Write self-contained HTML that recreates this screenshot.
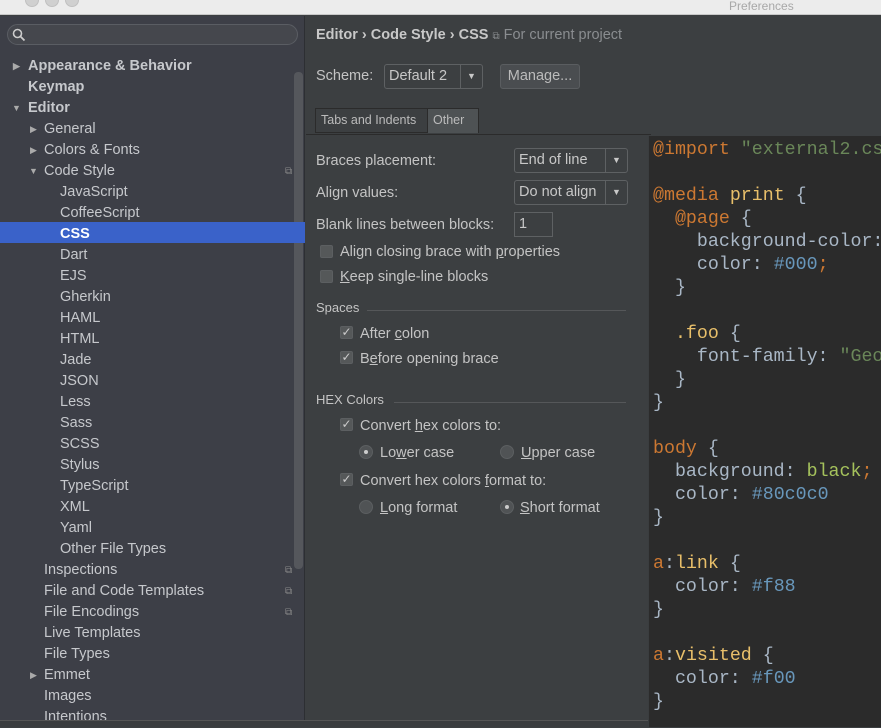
<!DOCTYPE html>
<html><head><meta charset="utf-8"><style>
*{margin:0;padding:0;box-sizing:border-box}
body{width:881px;height:727px;overflow:hidden;background:#3c3f41;font-family:"Liberation Sans",sans-serif;color:#bbbbbb;position:relative;font-size:14px}
.title{position:absolute;left:0;top:0;width:881px;height:15px;background:#ececec;border-bottom:1px solid #c8c8c8;overflow:hidden}
.title .t{position:absolute;left:729px;top:-1px;font-size:12px;color:#a8a8a8}
.dot{position:absolute;top:-7px;width:14px;height:14px;border-radius:50%;background:#d0d0d0;border:1px solid #c0c0c0}
.side{position:absolute;left:0;top:16px;width:305px;height:711px;background:#3d3f47;border-right:1px solid #2d2f33}
.search{position:absolute;left:7px;top:8px;width:291px;height:21px;border-radius:11px;border:1px solid #5a5d63;background:#45474d}
.row{position:absolute;left:0;width:294px;height:21px;line-height:21px;font-size:14.5px;color:#c6c8cc;white-space:nowrap}
.row.b{font-weight:bold}
.row.sel{background:#3a62c9;color:#fff;font-weight:bold}
.arr{position:absolute;font-size:9px;color:#aaa}
.cp{position:absolute;left:285px;font-size:10px;color:#888}
.sb{position:absolute;left:294px;top:56px;width:9px;height:497px;background:#55575c;border-radius:4px}
.main{position:absolute;left:306px;top:16px;width:575px;height:711px}
.crumb{position:absolute;left:10px;top:11px;font-size:14.5px;font-weight:bold;color:#c8c8c8}
.crumb span{font-weight:normal;color:#8a8d90}
.lbl{position:absolute;font-size:14.5px;color:#c4c4c4;white-space:nowrap}
.combo{position:absolute;height:25px;border:1px solid #5e6163;border-radius:3px;background:#3c3f41;font-size:14.5px;line-height:23px;padding-left:4px;color:#c8c8c8}
.combo i{position:absolute;right:0;top:0;width:22px;height:23px;border-left:1px solid #5e6163;font-style:normal;text-align:center;font-size:9px;line-height:23px}
.btn{position:absolute;left:194px;top:48px;width:80px;height:25px;border:1px solid #5a5d60;border-radius:3px;background:#4a4d50;text-align:center;line-height:23px;font-size:14.5px}
.tabs{position:absolute;left:0;top:91px;width:345px;height:28px;border-bottom:1px solid #2b2b2b}
.tab{position:absolute;top:1px;height:25px;border:1px solid #2b2b2b;font-size:12.5px;line-height:23px;padding:0 5px}
.cb{position:absolute;width:13px;height:13px;border:1px solid #5c5f61;border-radius:2px;background:#555859;font-size:12px;line-height:11px;text-align:center;color:#ccc}
.rb{position:absolute;width:14px;height:14px;border-radius:50%;background:#505355;border:1px solid #5c5f61}
.rb.on::after{content:"";position:absolute;left:4px;top:4px;width:4px;height:4px;border-radius:50%;background:#ccc}
.sep{position:absolute;height:1px;background:#555759}
u{text-decoration:underline}
.code{position:absolute;left:342px;top:120px;width:233px;height:591px;background:#2b2b2b;border-left:1px solid #3a3d3f;overflow:hidden;font-family:"Liberation Mono",monospace;font-size:18.3px;color:#a9b7c6}
.code div{position:absolute;left:4px;white-space:pre;line-height:23px}
.k{color:#cc7832}.y{color:#e8bf6a}.g{color:#6a8759}.n{color:#6897bb}.l{color:#a5c25c}
</style></head><body>
<div class="title"><div class="dot" style="left:25px"></div><div class="dot" style="left:45px"></div><div class="dot" style="left:65px"></div><div class="t">Preferences</div></div>
<div class="side">
<div class="search"><svg width="14" height="14" style="position:absolute;left:4px;top:3px"><circle cx="5.5" cy="5.5" r="4" fill="none" stroke="#ccc" stroke-width="1.6"/><path d="M8.5 8.5L12.5 12.5" stroke="#ccc" stroke-width="1.8"/></svg></div>
<div class="sb"></div>
<div class="row b" style="top:40px"><span class="arr" style="left:13px">▶</span><span style="position:absolute;left:28px">Appearance &amp; Behavior</span></div>
<div class="row b" style="top:61px"><span style="position:absolute;left:28px">Keymap</span></div>
<div class="row b" style="top:82px"><span class="arr" style="left:12px">▼</span><span style="position:absolute;left:28px">Editor</span></div>
<div class="row" style="top:103px"><span class="arr" style="left:30px">▶</span><span style="position:absolute;left:44px">General</span></div>
<div class="row" style="top:124px"><span class="arr" style="left:30px">▶</span><span style="position:absolute;left:44px">Colors &amp; Fonts</span></div>
<div class="row" style="top:145px"><span class="arr" style="left:29px">▼</span><span style="position:absolute;left:44px">Code Style</span><span class="cp">⧉</span></div>
<div class="row" style="top:166px"><span style="position:absolute;left:60px">JavaScript</span></div>
<div class="row" style="top:187px"><span style="position:absolute;left:60px">CoffeeScript</span></div>
<div class="row sel" style="top:206px;width:305px;line-height:25px"><span style="position:absolute;left:60px">CSS</span></div>
<div class="row" style="top:229px"><span style="position:absolute;left:60px">Dart</span></div>
<div class="row" style="top:250px"><span style="position:absolute;left:60px">EJS</span></div>
<div class="row" style="top:271px"><span style="position:absolute;left:60px">Gherkin</span></div>
<div class="row" style="top:292px"><span style="position:absolute;left:60px">HAML</span></div>
<div class="row" style="top:313px"><span style="position:absolute;left:60px">HTML</span></div>
<div class="row" style="top:334px"><span style="position:absolute;left:60px">Jade</span></div>
<div class="row" style="top:355px"><span style="position:absolute;left:60px">JSON</span></div>
<div class="row" style="top:376px"><span style="position:absolute;left:60px">Less</span></div>
<div class="row" style="top:397px"><span style="position:absolute;left:60px">Sass</span></div>
<div class="row" style="top:418px"><span style="position:absolute;left:60px">SCSS</span></div>
<div class="row" style="top:439px"><span style="position:absolute;left:60px">Stylus</span></div>
<div class="row" style="top:460px"><span style="position:absolute;left:60px">TypeScript</span></div>
<div class="row" style="top:481px"><span style="position:absolute;left:60px">XML</span></div>
<div class="row" style="top:502px"><span style="position:absolute;left:60px">Yaml</span></div>
<div class="row" style="top:523px"><span style="position:absolute;left:60px">Other File Types</span></div>
<div class="row" style="top:544px"><span style="position:absolute;left:44px">Inspections</span><span class="cp">⧉</span></div>
<div class="row" style="top:565px"><span style="position:absolute;left:44px">File and Code Templates</span><span class="cp">⧉</span></div>
<div class="row" style="top:586px"><span style="position:absolute;left:44px">File Encodings</span><span class="cp">⧉</span></div>
<div class="row" style="top:607px"><span style="position:absolute;left:44px">Live Templates</span></div>
<div class="row" style="top:628px"><span style="position:absolute;left:44px">File Types</span></div>
<div class="row" style="top:649px"><span class="arr" style="left:30px">▶</span><span style="position:absolute;left:44px">Emmet</span></div>
<div class="row" style="top:670px"><span style="position:absolute;left:44px">Images</span></div>
<div class="row" style="top:691px"><span style="position:absolute;left:44px">Intentions</span></div>
</div>
<div style="position:absolute;left:0;top:720px;width:881px;height:7px;background:#3a3c3e;border-top:1px solid #555"></div>
<div class="main">
<div class="crumb">Editor › Code Style › CSS <span style="font-size:10px">⧉</span> <span>For current project</span></div>
<div class="lbl" style="left:10px;top:52px">Scheme:</div>
<div class="combo" style="left:78px;top:48px;width:99px">Default 2<i>▼</i></div>
<div class="btn">Manage...</div>
<div class="tabs"><div class="tab" style="left:9px;width:113px;background:#3c3f41">Tabs and Indents</div><div class="tab" style="left:121px;width:52px;background:#4e5254;border-bottom:none">Other</div></div>
<div class="lbl" style="left:10px;top:137px">Braces placement:</div>
<div class="combo" style="left:208px;top:132px;width:114px">End of line<i>▼</i></div>
<div class="lbl" style="left:10px;top:169px">Align values:</div>
<div class="combo" style="left:208px;top:164px;width:114px">Do not align<i>▼</i></div>
<div class="lbl" style="left:10px;top:201px">Blank lines between blocks:</div>
<div class="combo" style="left:208px;top:196px;width:39px;border-radius:0">1</div>
<div class="cb" style="left:14px;top:229px"></div><div class="lbl" style="left:34px;top:228px">Align closing brace with <u>p</u>roperties</div>
<div class="cb" style="left:14px;top:254px"></div><div class="lbl" style="left:34px;top:253px"><u>K</u>eep single-line blocks</div>
<div class="lbl" style="left:10px;top:284px;font-size:13px">Spaces</div><div class="sep" style="left:61px;top:294px;width:259px"></div>
<div class="cb" style="left:34px;top:310px">✓</div><div class="lbl" style="left:54px;top:310px">After <u>c</u>olon</div>
<div class="cb" style="left:34px;top:335px">✓</div><div class="lbl" style="left:54px;top:335px">B<u>e</u>fore opening brace</div>
<div class="lbl" style="left:10px;top:376px;font-size:13px">HEX Colors</div><div class="sep" style="left:88px;top:386px;width:232px"></div>
<div class="cb" style="left:34px;top:402px">✓</div><div class="lbl" style="left:54px;top:402px">Convert <u>h</u>ex colors to:</div>
<div class="rb on" style="left:53px;top:429px"></div><div class="lbl" style="left:74px;top:429px">Lo<u>w</u>er case</div>
<div class="rb" style="left:194px;top:429px"></div><div class="lbl" style="left:215px;top:429px"><u>U</u>pper case</div>
<div class="cb" style="left:34px;top:457px">✓</div><div class="lbl" style="left:54px;top:457px">Convert hex colors <u>f</u>ormat to:</div>
<div class="rb" style="left:53px;top:484px"></div><div class="lbl" style="left:74px;top:484px"><u>L</u>ong format</div>
<div class="rb on" style="left:194px;top:484px"></div><div class="lbl" style="left:214px;top:484px"><u>S</u>hort format</div>
<div class="code">
<div style="top:3px"><span class="k">@import</span> <span class="g">"external2.css"</span></div>
<div style="top:49px"><span class="k">@media</span> <span class="y">print</span> {</div>
<div style="top:72px">  <span class="k">@page</span> {</div>
<div style="top:95px">    background-color:</div>
<div style="top:118px">    color: <span class="n">#000</span><span class="k">;</span></div>
<div style="top:141px">  }</div>
<div style="top:187px">  <span class="y">.foo</span> {</div>
<div style="top:210px">    font-family: <span class="g">"Georgia"</span></div>
<div style="top:233px">  }</div>
<div style="top:256px">}</div>
<div style="top:302px"><span class="k">body</span> {</div>
<div style="top:325px">  background: <span class="l">black</span><span class="k">;</span></div>
<div style="top:348px">  color: <span class="n">#80c0c0</span></div>
<div style="top:371px">}</div>
<div style="top:417px"><span class="k">a</span>:<span class="y">link</span> {</div>
<div style="top:440px">  color: <span class="n">#f88</span></div>
<div style="top:463px">}</div>
<div style="top:509px"><span class="k">a</span>:<span class="y">visited</span> {</div>
<div style="top:532px">  color: <span class="n">#f00</span></div>
<div style="top:555px">}</div>
</div>
</div>
</body></html>
